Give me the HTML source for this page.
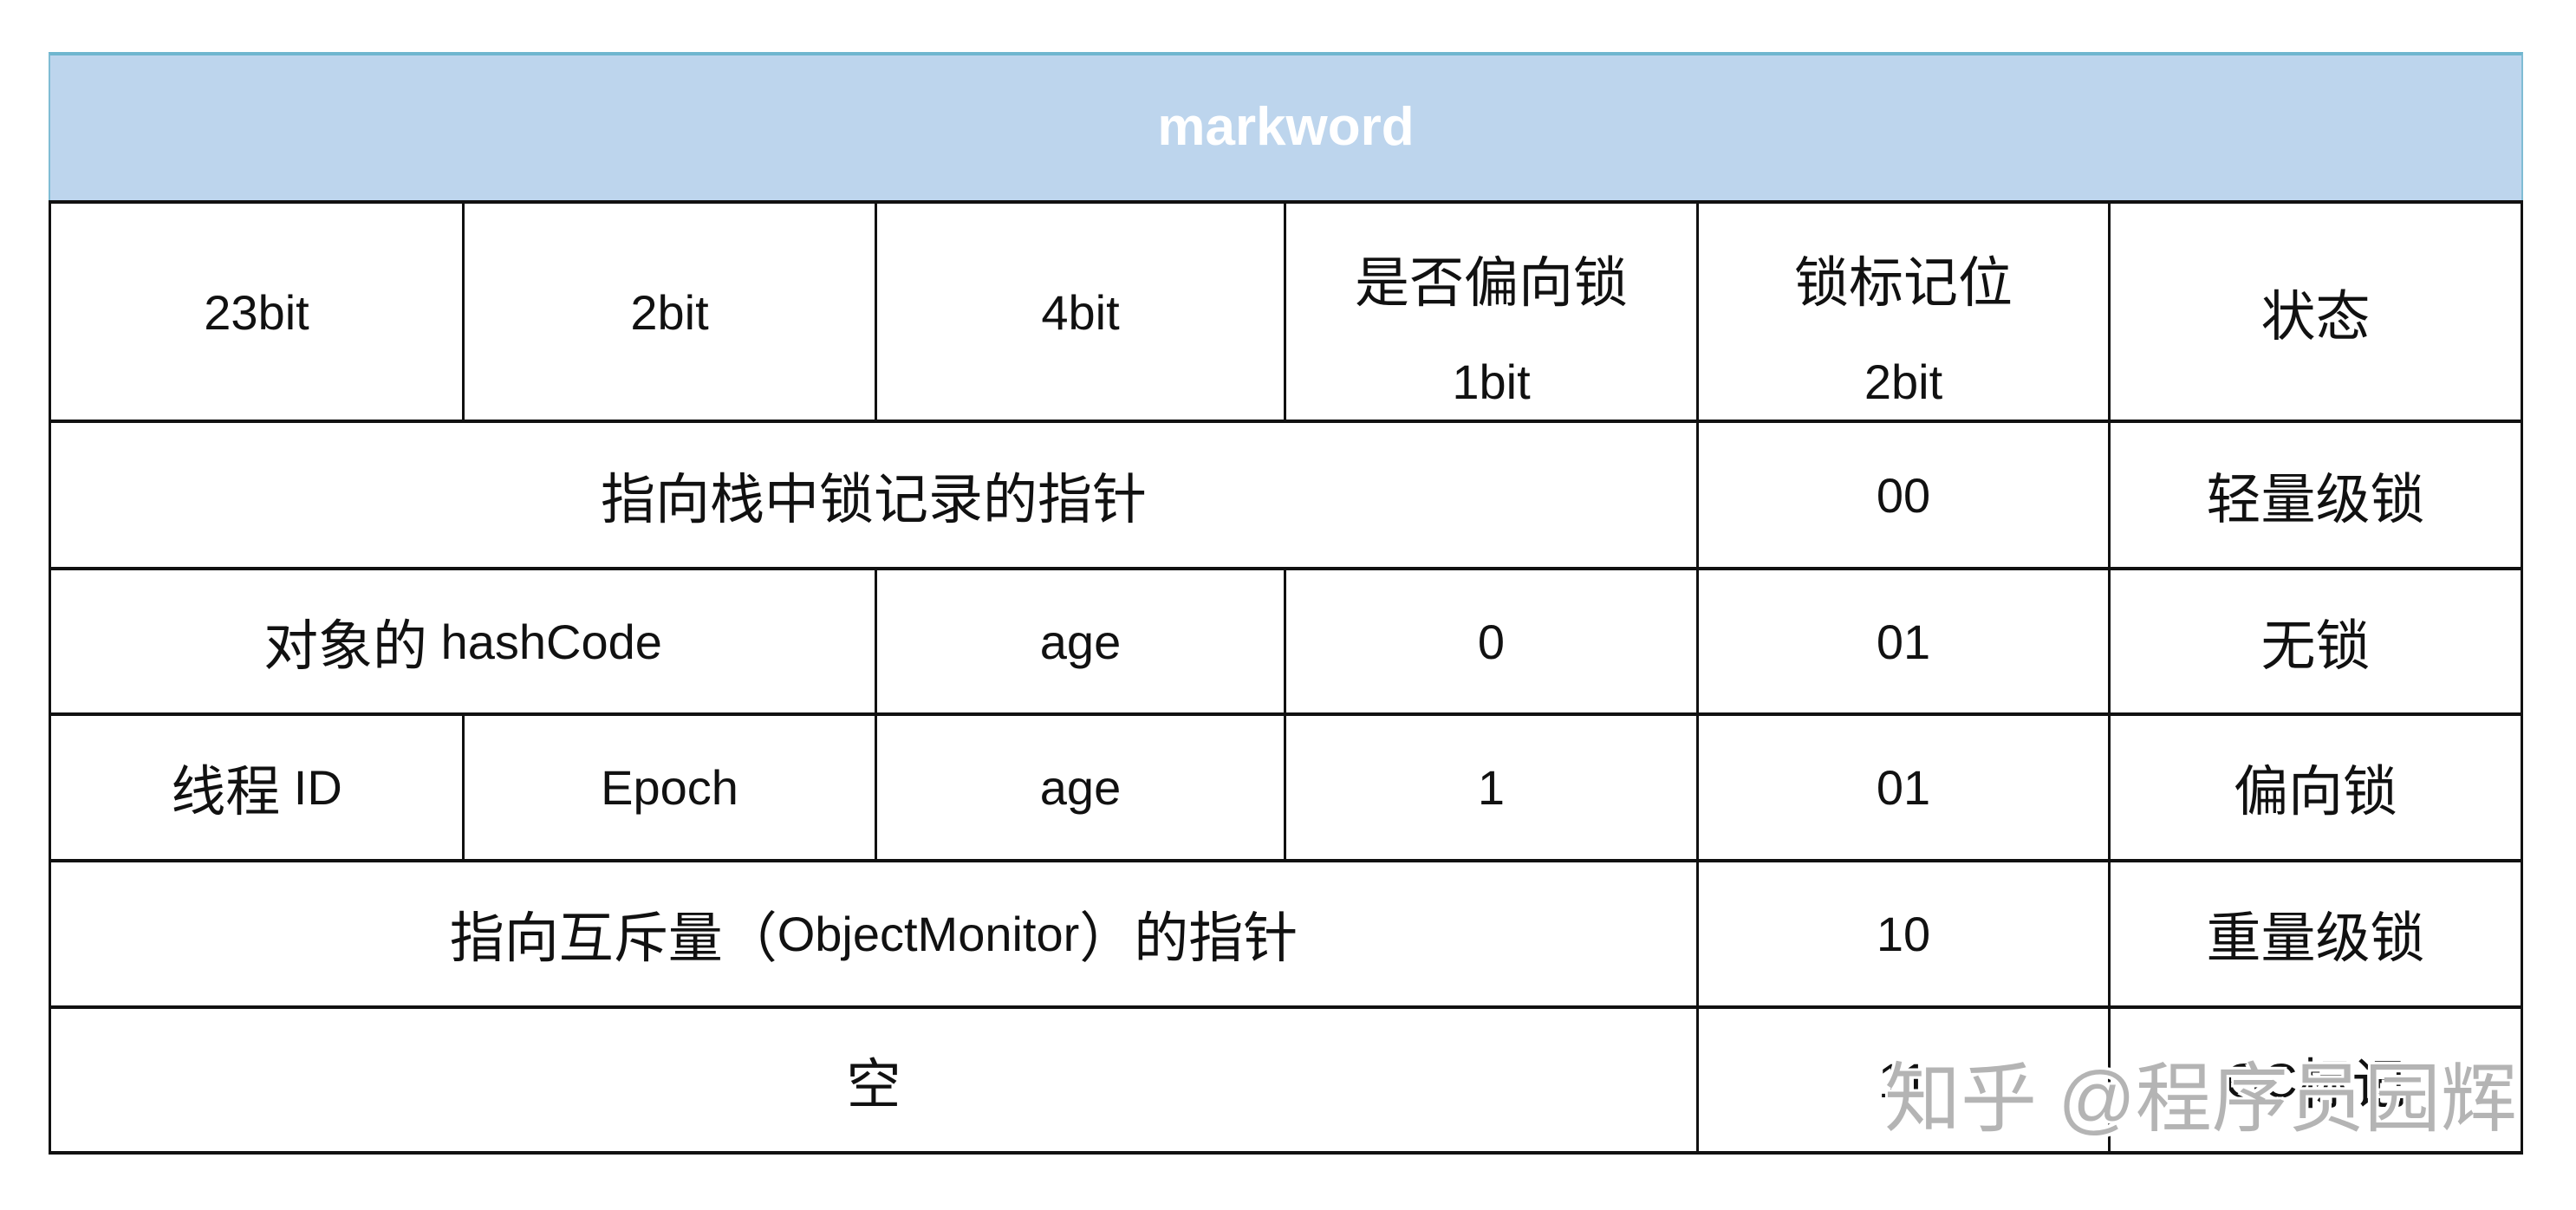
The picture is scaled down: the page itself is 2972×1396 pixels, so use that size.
<!DOCTYPE html>
<html><head><meta charset="utf-8"><style>
html,body{margin:0;padding:0;background:#fff;}
body{width:2972px;height:1396px;position:relative;overflow:hidden;font-family:"Liberation Sans","Noto Sans CJK SC",sans-serif;color:#111;}
.h{position:absolute;left:56px;width:2855px;height:4px;background:#111;}
.v{position:absolute;width:3px;background:#111;}
.c{position:absolute;display:flex;align-items:center;justify-content:center;font-size:56px;white-space:nowrap;}
.t{position:absolute;text-align:center;font-size:56px;white-space:nowrap;}
.k{font-size:63px;}
</style></head><body>
<div style="position:absolute;left:56px;top:60px;width:2855px;height:173px;background:#bdd5ed;border-top:4px solid #6fb6cf;border-left:2px solid #7fbcd4;border-right:2px solid #7fbcd4;box-sizing:border-box;"></div>
<div class="c" style="left:56px;top:60px;width:2855px;height:173px;color:#fff;font-weight:bold;font-size:62px;">markword</div>

<div class="h" style="top:231px"></div>
<div class="h" style="top:484px"></div>
<div class="h" style="top:654px"></div>
<div class="h" style="top:822px"></div>
<div class="h" style="top:991px"></div>
<div class="h" style="top:1160px"></div>
<div class="h" style="top:1328px"></div>
<div class="v" style="left:56px;top:233px;height:1097px"></div>
<div class="v" style="left:2908px;top:233px;height:1097px"></div>
<div class="v" style="left:1957px;top:233px;height:1097px"></div>
<div class="v" style="left:2432px;top:233px;height:1097px"></div>
<div class="v" style="left:533px;top:233px;height:253px"></div>
<div class="v" style="left:1009px;top:233px;height:253px"></div>
<div class="v" style="left:1481px;top:233px;height:253px"></div>
<div class="v" style="left:1009px;top:656px;height:337px"></div>
<div class="v" style="left:1481px;top:656px;height:337px"></div>
<div class="v" style="left:533px;top:824px;height:169px"></div>

<div class="c" style="left:58px;top:235px;width:476px;height:250px">23bit</div>
<div class="c" style="left:535px;top:235px;width:475px;height:250px">2bit</div>
<div class="c" style="left:1011px;top:235px;width:471px;height:250px">4bit</div>
<div class="t" style="left:1483px;top:276px;width:475px;"><span class="k">是否偏向锁</span></div>
<div class="t" style="left:1483px;top:408px;width:475px;">1bit</div>
<div class="t" style="left:1959px;top:276px;width:474px;"><span class="k">锁标记位</span></div>
<div class="t" style="left:1959px;top:408px;width:474px;">2bit</div>
<div class="c" style="left:2434px;top:235px;width:475px;height:250px"><span class="k">状态</span></div>

<div class="c" style="left:58px;top:486px;width:1900px;height:170px"><span class="k">指向栈中锁记录的指针</span></div>
<div class="c" style="left:1959px;top:486px;width:474px;height:170px">00</div>
<div class="c" style="left:2434px;top:486px;width:475px;height:170px"><span class="k">轻量级锁</span></div>

<div class="c" style="left:58px;top:656px;width:952px;height:168px"><span class="k">对象的</span>&nbsp;hashCode</div>
<div class="c" style="left:1011px;top:656px;width:471px;height:168px">age</div>
<div class="c" style="left:1483px;top:656px;width:475px;height:168px">0</div>
<div class="c" style="left:1959px;top:656px;width:474px;height:168px">01</div>
<div class="c" style="left:2434px;top:656px;width:475px;height:168px"><span class="k">无锁</span></div>

<div class="c" style="left:58px;top:824px;width:476px;height:169px"><span class="k">线程</span>&nbsp;ID</div>
<div class="c" style="left:535px;top:824px;width:475px;height:169px">Epoch</div>
<div class="c" style="left:1011px;top:824px;width:471px;height:169px">age</div>
<div class="c" style="left:1483px;top:824px;width:475px;height:169px">1</div>
<div class="c" style="left:1959px;top:824px;width:474px;height:169px">01</div>
<div class="c" style="left:2434px;top:824px;width:475px;height:169px"><span class="k">偏向锁</span></div>

<div class="c" style="left:58px;top:993px;width:1900px;height:169px"><span class="k">指向互斥量（</span>ObjectMonitor<span class="k">）的指针</span></div>
<div class="c" style="left:1959px;top:993px;width:474px;height:169px">10</div>
<div class="c" style="left:2434px;top:993px;width:475px;height:169px"><span class="k">重量级锁</span></div>

<div class="c" style="left:58px;top:1162px;width:1900px;height:168px"><span class="k">空</span></div>
<div class="c" style="left:1959px;top:1162px;width:474px;height:168px">11</div>
<div class="c" style="left:2434px;top:1162px;width:475px;height:168px">GC<span class="k">标记</span></div>

<div style="position:absolute;left:2174px;top:1220px;font-size:88px;line-height:96px;color:#b4b4b4;font-family:'Liberation Sans','Noto Sans CJK SC',sans-serif;white-space:nowrap;text-shadow:-3px -3px 0 #fff,3px -3px 0 #fff,-3px 3px 0 #fff,3px 3px 0 #fff;">知乎 @程序员园辉</div>
</body></html>
